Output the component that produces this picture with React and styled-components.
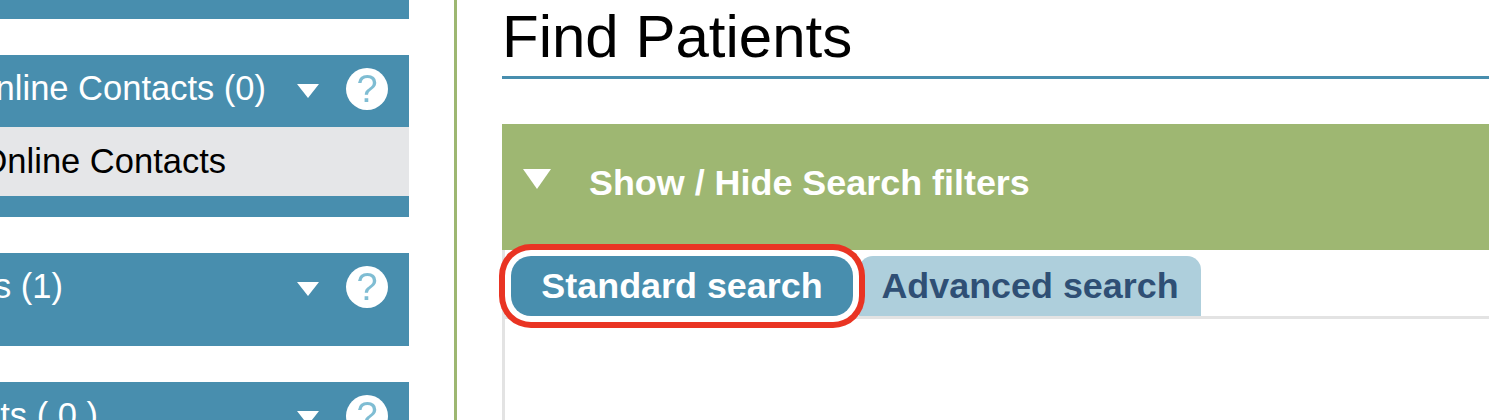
import React from 'react'
import styled, { createGlobalStyle } from "styled-components";

const GlobalStyle = createGlobalStyle`
  html, body {
    margin: 0;
    height: 100%;
    overflow: hidden;
    background: #fff;
    font-family: "Liberation Sans", Arial, sans-serif;
  }
`;

const Page = styled.div`
  display: flex;
  height: 420px;
  overflow: hidden;
`;
const Sidebar = styled.aside`
  flex: 0 0 409px;
  min-width: 0;
  display: flex;
  flex-direction: column;
  gap: 36px;
  margin-top: -53px;
`;
const Panel = styled.section`
  flex: 0 0 auto;
  height: ${({$height})=>$height}px;
  background-color: #488eae;
  overflow: hidden;
`;
const PanelHeader = styled.div`
  display: flex;
  align-items: flex-start;
  height: 72px;
`;
const PanelTitle = styled.div`
  display: flex;
  justify-content: flex-end;
  flex: 0 0 ${({$end})=>$end}px;
  min-width: 0;
  margin-top: 13px;
  font-size: 34.5px;
  line-height: 40px;
  color: #fff;
  white-space: nowrap;
`;
const TitleText = styled.span`
  flex: 0 0 auto;
`;
const Caret = styled.span`
  flex: 0 0 auto;
  width: 0;
  height: 0;
  margin-top: 29px;
  margin-left: ${({$end})=>297 - $end}px;
  border-left: 11px solid transparent;
  border-right: 11px solid transparent;
  border-top: 14px solid #fff;
`;
const HelpIcon = styled.span`
  flex: 0 0 42px;
  height: 42px;
  margin-top: 13px;
  margin-left: 27px;
  border-radius: 50%;
  background-color: #fff;
  color: #7fbdd3;
  font-size: 38px;
  font-weight: 400;
  line-height: 42px;
  text-align: center;
  filter: blur(0.6px);
`;
const PanelRowBg = styled.div`
  background-color: #e5e6e8;
`;
const PanelRow = styled.div`
  display: flex;
  justify-content: flex-end;
  width: 226px;
  height: 69px;
  box-sizing: border-box;
  padding-top: 14px;
  font-size: 34.5px;
  line-height: 40px;
  color: #000;
  white-space: nowrap;
`;

const Content = styled.main`
  flex: 1;
  min-width: 0;
  margin-left: 45px;
  border-left: 3px solid #9db771;
  padding-left: 45px;
`;
const Heading = styled.h1`
  margin: 0 0 45px;
  height: 76px;
  border-bottom: 3px solid #488eae;
  font-size: 60px;
  font-weight: 400;
  line-height: 74px;
  color: #000;
  box-sizing: content-box;
`;
const FilterBar = styled.div`
  display: flex;
  align-items: flex-start;
  height: 126px;
  background-color: #9eb772;
  color: #fff;
`;
const FilterCaret = styled.span`
  width: 0;
  height: 0;
  margin-top: 45px;
  margin-left: 21px;
  border-left: 14px solid transparent;
  border-right: 14px solid transparent;
  border-top: 20px solid #fff;
`;
const FilterLabel = styled.span`
  margin-top: 38px;
  margin-left: 38px;
  font-size: 35.9px;
  font-weight: 700;
  line-height: 42px;
`;
const TabArea = styled.div`
  height: 170px;
  border-left: 3px solid #e3e3e3;
`;
const TabRow = styled.div`
  display: flex;
  align-items: flex-start;
  gap: 6px;
  height: 69px;
  box-sizing: border-box;
  padding: 6px 0 0 6px;
  border-bottom: 3px solid #e3e3e3;
`;
const Tab = styled.div`
  display: flex;
  align-items: center;
  justify-content: center;
  width: ${({$width})=>$width}px;
  height: 60px;
  font-size: 35.9px;
  font-weight: 700;
  line-height: 60px;
  white-space: nowrap;
`;
const ActiveTab = styled(Tab)`
  position: relative;
  z-index: 1;
  border-radius: 20px;
  background-color: #488eae;
  color: #fff;
  box-shadow: 0 0 0 6px #fff, 0 0 0 12px #e93423;
`;
const IdleTab = styled(Tab)`
  border-radius: 14px 14px 0 0;
  background-color: #aecfdc;
  color: #2f4f75;
`;

function SidePanel({height, end, title, children}) {
  return (
    <Panel $height={height}>
      <PanelHeader>
        <PanelTitle $end={end}><TitleText>{title}</TitleText></PanelTitle>
        <Caret $end={end} />
        <HelpIcon>?</HelpIcon>
      </PanelHeader>
      {children}
    </Panel>
  )
}

function App() {
  return (
    <Page>
      <GlobalStyle />
      <Sidebar>
        <Panel $height={72} />
        <SidePanel height={162} end={266} title="Online Contacts (0)">
          <PanelRowBg>
            <PanelRow><TitleText>Online Contacts</TitleText></PanelRow>
          </PanelRowBg>
        </SidePanel>
        <SidePanel height={93} end={63} title="s (1)" />
        <SidePanel height={93} end={98} title="ts ( 0 )" />
      </Sidebar>
      <Content>
        <Heading>Find Patients</Heading>
        <FilterBar>
          <FilterCaret />
          <FilterLabel>Show / Hide Search filters</FilterLabel>
        </FilterBar>
        <TabArea>
          <TabRow>
            <ActiveTab $width={342}>Standard search</ActiveTab>
            <IdleTab $width={342}>Advanced search</IdleTab>
          </TabRow>
        </TabArea>
      </Content>
    </Page>
  )
}

export default App
